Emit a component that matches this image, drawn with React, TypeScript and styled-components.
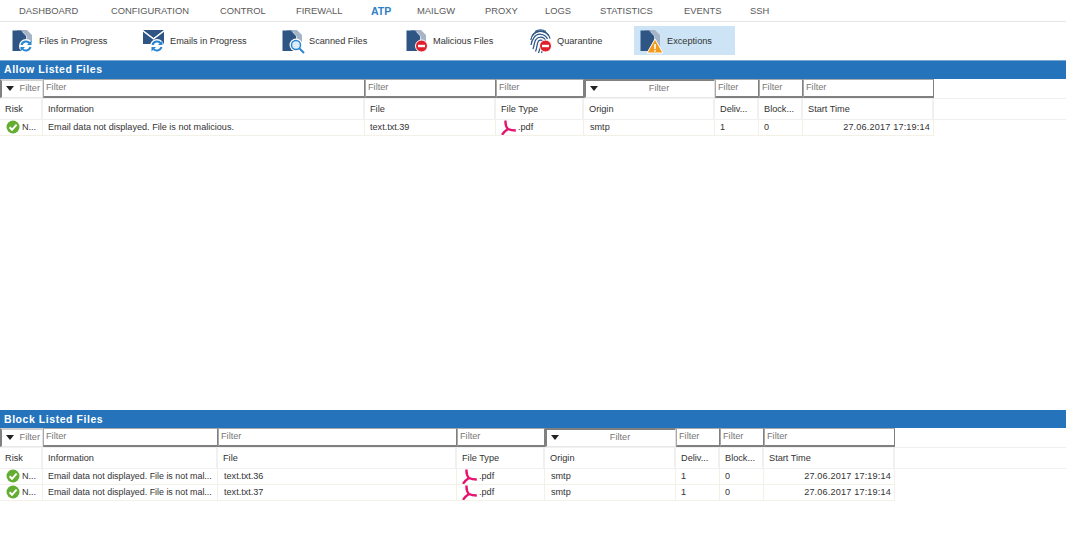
import React from "react";
import styled, { createGlobalStyle } from "styled-components";

const Global = createGlobalStyle`
  html, body { margin: 0; padding: 0; background: #fff; }
  body { font-family: "Liberation Sans", Arial, sans-serif; font-size: 9.2px; color: #333; }
`;

const Page = styled.div`
  width: 1066px;
  height: 558px;
  display: flex;
  flex-direction: column;
  overflow: hidden;
`;

const Nav = styled.nav`
  height: 21px;
  flex: none;
  display: flex;
  align-items: center;
  padding-left: 19px;
  border-bottom: 1px solid #e6e6e6;
`;

const NavItem = styled.span<{ $w: number; $active?: boolean }>`
  width: ${(p) => p.$w}px;
  flex: none;
  font-size: ${(p) => (p.$active ? 10.5 : 9.4)}px;
  font-weight: ${(p) => (p.$active ? 700 : 400)};
  color: ${(p) => (p.$active ? "#2f7fc9" : "#5a5a5a")};
`;

const Toolbar = styled.div`
  height: 38px;
  flex: none;
  display: flex;
  align-items: center;
  padding-left: 6px;
  padding-bottom: 1px;
  box-sizing: border-box;
`;

const Tool = styled.div<{ $w: number; $active?: boolean }>`
  width: ${(p) => p.$w}px;
  height: 29px;
  flex: none;
  display: flex;
  align-items: center;
  gap: 3px;
  padding-left: 6px;
  box-sizing: border-box;
  font-size: 9.2px;
  color: #333;
  background: ${(p) => (p.$active ? "#cce4f5" : "transparent")};
`;

const Section = styled.section<{ $h: number }>`
  height: ${(p) => p.$h}px;
  flex: none;
  display: flex;
  flex-direction: column;
`;

const Title = styled.div<{ $plain?: boolean }>`
  height: ${(p) => (p.$plain ? 18 : 19)}px;
  flex: none;
  background: #2574bb;
  border-top: ${(p) => (p.$plain ? "none" : "1px solid #7aa8d2")};
  box-sizing: border-box;
  padding-left: 4px;
  color: #fff;
  font-size: 10.5px;
  font-weight: 700;
  letter-spacing: 0.55px;
  line-height: ${(p) => (p.$plain ? 19 : 17)}px;
`;

const Row = styled.div<{ $cols: string; $h: number; $rule?: boolean }>`
  display: grid;
  grid-template-columns: ${(p) => p.$cols};
  height: ${(p) => p.$h}px;
  flex: none;
  ${(p) => (p.$rule ? "border-bottom: 1px solid #f0f0f0; border-top: 1px solid #f0f0f0; box-sizing: content-box;" : "")}
`;

const FilterInput = styled.div`
  box-sizing: border-box;
  border: 1px solid #a8a8a8;
  border-right-color: #808080;
  border-bottom: 2px solid #808080;
  padding-left: 2px;
  font-size: 9.2px;
  line-height: 15px;
  color: #777;
  background: #fff;
`;

const FilterDrop = styled.div<{ $narrow?: boolean }>`
  box-sizing: border-box;
  border-top: 2px solid ${(p) => (p.$narrow ? "#d0d0d0" : "#808080")};
  border-left: 2px solid #808080;
  border-right: 1px solid #e0e0e0;
  border-bottom: 1px solid #e8e8e8;
  display: flex;
  align-items: center;
  font-size: 9.2px;
  color: #777;
  padding: 0 2px 2px 4px;
  &::before {
    content: "";
    border-left: 4px solid transparent;
    border-right: 4px solid transparent;
    border-top: 5px solid #222;
  }
`;

const DropLabel = styled.span<{ $narrow?: boolean }>`
  flex: 1;
  text-align: ${(p) => (p.$narrow ? "right" : "center")};
  padding-left: ${(p) => (p.$narrow ? 0 : 8)}px;
`;

const Head = styled.div`
  box-sizing: border-box;
  border-right: 2px solid #f0f0f0;
  padding-left: 5px;
  font-size: 9.2px;
  line-height: 20px;
  color: #333;
  white-space: nowrap;
  overflow: hidden;
`;

const Cell = styled.div<{ $right?: boolean; $pad?: number }>`
  box-sizing: border-box;
  border-right: 1px solid #f3f0e6;
  border-bottom: 1px solid #f3f0e6;
  padding-left: ${(p) => p.$pad ?? 5}px;
  padding-right: ${(p) => (p.$right ? 3 : 0)}px;
  padding-bottom: 1px;
  font-size: 9.1px;
  letter-spacing: ${(p) => (p.$right ? 0.18 : 0)}px;
  line-height: 14px;
  color: #333;
  white-space: nowrap;
  overflow: hidden;
  display: flex;
  align-items: center;
  justify-content: ${(p) => (p.$right ? "flex-end" : "flex-start")};
  gap: 2px;
`;

const InfoText = styled.span<{ $tight?: boolean }>`
  font-size: ${(p) => (p.$tight ? 8.9 : 9.1)}px;
`;

const Doc = () => (
  <>
    <path d="M5 2 H15 L20 7 V20 H14.5 V8 L11 4 H5Z" fill="#a6b4c8" />
    <path d="M0.5 2.5 H9 L14 8 V23 H0.5Z" fill="#2f5585" />
  </>
);

const Sync = () => (
  <g fill="none" stroke="#2a86d0" strokeWidth="2">
    <circle cx="14" cy="18" r="7" fill="#fff" stroke="none" />
    <path d="M9.5 17 A4.8 4.8 0 0 1 18 15.5" />
    <path d="M18.5 19 A4.8 4.8 0 0 1 10 20.5" />
    <path d="M19.5 12.5 V17 H15Z" fill="#2a86d0" stroke="none" />
    <path d="M8.5 23.5 V19 H13Z" fill="#2a86d0" stroke="none" />
  </g>
);

const Block = () => (
  <g>
    <circle cx="15.5" cy="18" r="6" fill="#e0202c" stroke="#fff" strokeWidth="1" />
    <rect x="12" y="16.8" width="7" height="2.4" fill="#fff" />
  </g>
);

const Icon = styled.svg`
  width: 24px;
  height: 26px;
  flex: none;
`;

const FileSync = () => (
  <Icon viewBox="0 0 24 26"><Doc /><Sync /></Icon>
);
const MailSync = () => (
  <Icon viewBox="0 0 24 26">
    <path d="M0 3 L10.5 11 L21 3 V16 H0Z" fill="#2f5585" />
    <path d="M0 2 H21 L10.5 10Z" fill="#2f5585" />
    <path d="M0 3 L10.5 11 L21 3" fill="none" stroke="#fff" strokeWidth="1.2" />
    <Sync />
  </Icon>
);
const FileSearch = () => (
  <Icon viewBox="0 0 24 26">
    <Doc />
    <circle cx="14" cy="17" r="6.5" fill="#fff" />
    <circle cx="14" cy="17" r="4.5" fill="#dcecf8" stroke="#2a86d0" strokeWidth="1.5" />
    <path d="M17.5 20.5 L22 25" stroke="#2a86d0" strokeWidth="2" />
  </Icon>
);
const FileBlock = () => (
  <Icon viewBox="0 0 24 26"><Doc /><Block /></Icon>
);
const Finger = () => (
  <Icon viewBox="0 0 24 26">
    <g fill="none" stroke="#2f5585" strokeWidth="1.25">
      <path d="M5 3.5 A11 11 0 0 1 16 3.5" />
      <path d="M2.5 7 A10 10 0 0 1 18.5 7" />
      <path d="M0.8 12 A9.8 9.8 0 0 1 20 10.5" />
      <path d="M1 17 C1.5 14 2 12 3.5 10.5 A7.7 7.7 0 0 1 17.5 11" />
      <path d="M3 21 C4.5 17 4 14 6 11.5 A5.5 5.5 0 0 1 15.5 12" />
      <path d="M5.5 23.5 C7.5 19 6.5 16 8.5 13 A3 3 0 0 1 13.5 14" />
      <path d="M8.5 25 C10.5 20 10 17 11 15" />
      <path d="M11.5 25 C12.5 23 13 21 13.2 19" />
    </g>
    <Block />
  </Icon>
);
const FileWarn = () => (
  <Icon viewBox="0 0 24 26">
    <Doc />
    <path d="M15 11 L23 25 H7Z" fill="#f39a1c" stroke="#fff" strokeWidth="1" />
    <rect x="14.2" y="16" width="1.6" height="5" fill="#fff" />
    <rect x="14.2" y="22" width="1.6" height="1.6" fill="#fff" />
  </Icon>
);

const SmallIcon = styled.svg`
  flex: none;
`;

const Check = () => (
  <SmallIcon width="14" height="14" viewBox="0 0 14 14">
    <circle cx="7" cy="7" r="6.5" fill="#63ad31" />
    <path d="M3.6 7.2 L6 9.8 L10.6 4.6" fill="none" stroke="#fff" strokeWidth="2" />
  </SmallIcon>
);

const Pdf = () => (
  <SmallIcon width="15" height="15" viewBox="0 0 15 15">
    <path
      d="M4.5 0.5 C4.3 4 5 7 7 9 C9 10 12 10.5 14.8 10.5 M7 9 C4.5 10.5 2.5 12.5 1 14.8"
      fill="none"
      stroke="#e4146e"
      strokeWidth="2.4"
    />
  </SmallIcon>
);

const navItems: [string, number, boolean?][] = [
  ["DASHBOARD", 92], ["CONFIGURATION", 109], ["CONTROL", 76], ["FIREWALL", 75],
  ["ATP", 46, true], ["MAILGW", 68], ["PROXY", 60], ["LOGS", 55],
  ["STATISTICS", 84], ["EVENTS", 66], ["SSH", 40],
];

const tools: [string, number, React.ReactNode, boolean?][] = [
  ["Files in Progress", 131, <FileSync />],
  ["Emails in Progress", 139, <MailSync />],
  ["Scanned Files", 124, <FileSearch />],
  ["Malicious Files", 124, <FileBlock />],
  ["Quarantine", 110, <Finger />],
  ["Exceptions", 101, <FileWarn />, true],
];

const heads = ["Risk", "Information", "File", "File Type", "Origin", "Deliv...", "Block...", "Start Time"];

type Data = { info: string; file: string };

const FileTable = ({ title, cols, h, rows, plain }: { title: string; cols: string; h: number; rows: Data[]; plain?: boolean }) => (
  <Section $h={h}>
    <Title $plain={plain}>{title}</Title>
    <Row $cols={cols} $h={19}>
      <FilterDrop $narrow><DropLabel $narrow>Filter</DropLabel></FilterDrop>
      <FilterInput>Filter</FilterInput>
      <FilterInput>Filter</FilterInput>
      <FilterInput>Filter</FilterInput>
      <FilterDrop><DropLabel>Filter</DropLabel></FilterDrop>
      <FilterInput>Filter</FilterInput>
      <FilterInput>Filter</FilterInput>
      <FilterInput>Filter</FilterInput>
    </Row>
    <Row $cols={cols} $h={20} $rule>
      {heads.map((t) => <Head key={t}>{t}</Head>)}
    </Row>
    {rows.map((r) => (
      <Row key={r.file} $cols={cols} $h={16}>
        <Cell $pad={6}><Check /><span>N...</span></Cell>
        <Cell><InfoText $tight={plain}>{r.info}</InfoText></Cell>
        <Cell $pad={plain ? 6 : 5}>{r.file}</Cell>
        <Cell><Pdf /><span>.pdf</span></Cell>
        <Cell $pad={6}>smtp</Cell>
        <Cell>1</Cell>
        <Cell>0</Cell>
        <Cell $right>27.06.2017 17:19:14</Cell>
      </Row>
    ))}
  </Section>
);

export default function App() {
  return (
    <Page>
      <Global />
      <Nav>
        {navItems.map(([t, w, a]) => <NavItem key={t} $w={w} $active={a}>{t}</NavItem>)}
      </Nav>
      <Toolbar>
        {tools.map(([t, w, icon, a]) => (
          <Tool key={t} $w={w} $active={a}>{icon}<span>{t}</span></Tool>
        ))}
      </Toolbar>
      <FileTable
        title="Allow Listed Files"
        cols="43px 322px 131px 88px 131px 44px 44px 131px"
        h={350}
        rows={[{ info: "Email data not displayed. File is not malicious.", file: "text.txt.39" }]}
      />
      <FileTable
        plain
        title="Block Listed Files"
        cols="43px 175px 239px 88px 131px 44px 44px 131px"
        h={148}
        rows={[
          { info: "Email data not displayed. File is not mal...", file: "text.txt.36" },
          { info: "Email data not displayed. File is not mal...", file: "text.txt.37" },
        ]}
      />
    </Page>
  );
}
